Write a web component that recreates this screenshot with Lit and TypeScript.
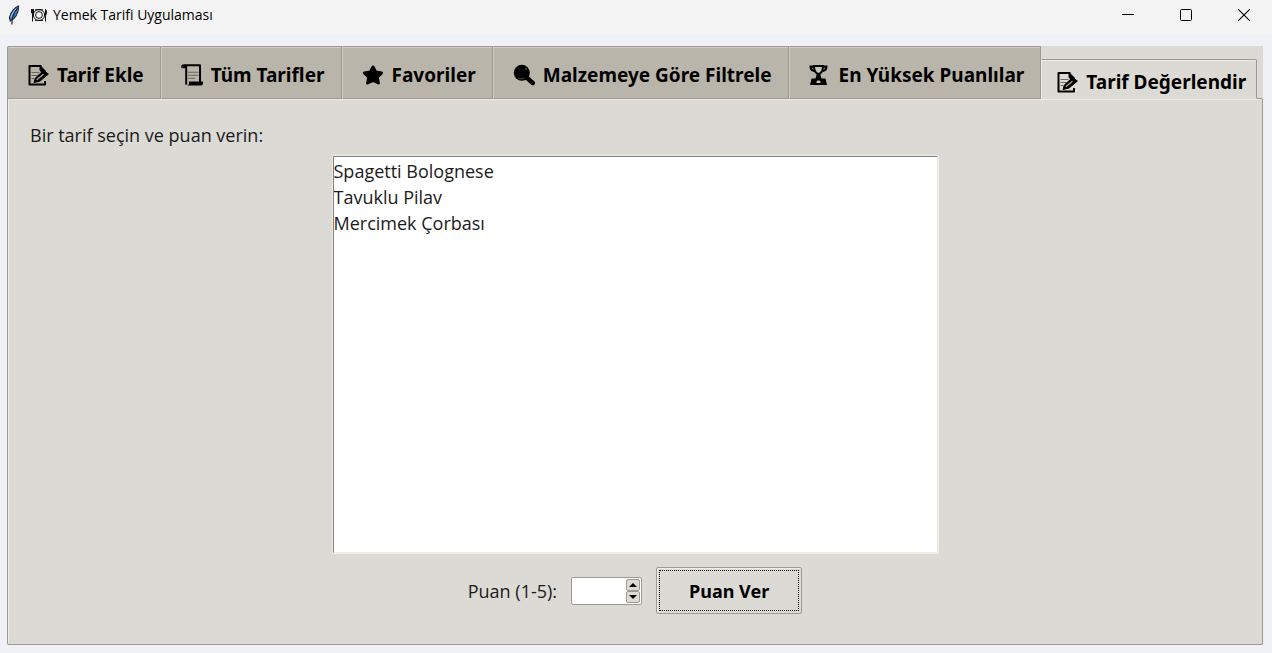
import { LitElement, html, css, svg } from "lit";
import { customElement, state } from "lit/decorators.js";
import { classMap } from "lit/directives/class-map.js";

const memo = svg`
  <path d="M14.500 2H2.500v18.500H18V17" fill="none" stroke="#000" stroke-width="2" stroke-linejoin="round"/>
  <path d="M13 1.500l5.500 5.500v2.500h-2L13 6.500z" fill="#000" stroke="#000" stroke-linejoin="round"/>
  <path d="M4.500 8.500h8M4.500 11.500h6M4.500 14.500h3" stroke="#6b675f" stroke-width="1"/>
  <path d="M7 18.500l1.400-4.500 8.200-7.500 4.800 3.600-8.400 7z" fill="#000" stroke="#000" stroke-width="1" stroke-linejoin="round"/>
  <path d="M9.800 15.800l6.600-5.600" stroke="#aaa69a" stroke-width="1.300"/>`;

const scroll = svg`
  <path d="M1.200 3.600C.8 2 1.600 1.200 3 1.200h16V18" fill="none" stroke="#000" stroke-width="2" stroke-linejoin="round"/>
  <path d="M1 4.200h4.600V1.400H3z" fill="#000"/>
  <path d="M5.200 2v18.600" stroke="#000" stroke-width="2"/>
  <path d="M7 8.200h10.500M7 11.200h10.500M7 14.200h7" stroke="#6b675f" stroke-width="1.100"/>
  <path d="M8 17.400h14v1.800c0 1.400-.8 2.200-2 2.200H5.600c1.600 0 2.400-1 2.400-2.200z" fill="#000"/>`;

const star = svg`
  <path d="M11 3l2.600 5 6 .9-4.400 4.200 1.200 5.900L11 16.400 5.600 19l1.200-5.900-4.400-4.200 6-.9z" fill="#000" stroke="#000" stroke-width="3" stroke-linejoin="round"/>`;

const lens = svg`
  <circle cx="8.800" cy="8.800" r="8" fill="#000"/>
  <path d="M13 13l6.800 6" stroke="#000" stroke-width="4.400" stroke-linecap="round"/>
  <path d="M5.400 14.200c1.600 1 4.400 1 6-.2" fill="none" stroke="#5d5a53" stroke-width=".9"/>
  <circle cx="13.200" cy="5" r=".8" fill="#77736a"/>`;

const trophy = svg`
  <path d="M5 2h9c0 4.500-1.600 7.200-4.500 8.200C6.600 9.200 5 6.500 5 2z" fill="#c9c5ba" stroke="#000" stroke-width="2"/>
  <path d="M5 2.600H1.600c0 2.800 1.400 4.200 4.200 4.600M14 2.600h3.400c0 2.800-1.400 4.200-4.200 4.600" fill="none" stroke="#000" stroke-width="2.200"/>
  <path d="M8 9.500h3l1.500 5h4l1.500 6.500H1L2.500 14.500h4z" fill="#000"/>
  <path d="M7.600 17.600c.6-1.400 3.200-1.400 3.800 0v1.400H7.600z" fill="#c9c5ba"/>`;

const tabs = [
  { label: "Tarif Ekle", icon: memo },
  { label: "Tüm Tarifler", icon: scroll },
  { label: "Favoriler", icon: star },
  { label: "Malzemeye Göre Filtrele", icon: lens },
  { label: "En Yüksek Puanlılar", icon: trophy },
  { label: "Tarif Değerlendir", icon: memo },
];

const recipes = ["Spagetti Bolognese", "Tavuklu Pilav", "Mercimek Çorbası"];

@customElement("app-root")
export class AppRoot extends LitElement {
  @state() private active = 5;
  @state() private score = "";

  static styles = css`
    :host {
      display: flex;
      flex-direction: column;
      box-sizing: border-box;
      min-height: 100vh;
      background: #f0f1f6;
      color: #1a1a1a;
      font-family: "Segoe UI", "Open Sans", sans-serif;
      font-size: 18px;
    }
    * { box-sizing: border-box; }
    button, input, select { font: inherit; color: inherit; margin: 0; }

    .titlebar {
      display: flex;
      align-items: center;
      gap: 2px;
      height: 34px;
      padding: 0 0 4px 6px;
      background: #f3f3f3;
    }
    .feather { width: 16px; height: 22px; }
    .plate { width: 18px; height: 16px; margin: 0 3px 0 6px; }
    .title { flex: 1; margin: 0; font-size: 14px; line-height: 18px; font-weight: 400; color: #000; }
    .caption {
      width: 56px;
      height: 30px;
      padding: 0;
      border: 0;
      background: none;
      display: grid;
      place-items: center;
    }

    .notebook {
      flex: 1;
      display: flex;
      flex-direction: column;
      margin: 12px 9px 8px 7px;
      background: #dcdad5;
    }
    .tabs { display: flex; align-items: flex-end; margin-bottom: -1px; position: relative; }
    .tab {
      display: flex;
      align-items: center;
      gap: 8px;
      height: 53px;
      padding: 4px 16px 0 19px;
      border: 1px solid #9e9a91;
      border-left-color: #cfcbc2;
      box-shadow: inset 0 1px #cfcbc2;
      background: #bab5ab;
      color: #000;
      font-family: "Segoe UI", "Noto Sans", sans-serif;
      font-size: 19px;
      font-weight: 700;
      white-space: nowrap;
    }
    .tab:first-child { border-left-color: #9e9a91; border-top-left-radius: 2px; }
    .tab.active {
      height: 40px;
      padding: 6px 10px 0 14px;
      border-left-color: #eeebe7;
      border-bottom-color: #dcdad5;
      border-top-right-radius: 2px;
      box-shadow: inset 0 1px #eeebe7;
      background: #dcdad5;
    }
    .icon { width: 22px; height: 22px; flex: none; }

    .panel {
      flex: 1;
      display: flex;
      flex-direction: column;
      padding: 23px 22px 30px;
      border: 1px solid #9e9a91;
      border-radius: 0 2px 2px 2px;
      box-shadow: inset 1px 1px #eeebe7;
    }
    .prompt { line-height: 26px; }
    .list {
      flex: 1;
      align-self: center;
      width: 50%;
      margin-top: 8px;
      padding: 2px 0;
      border: 1px solid;
      border-color: #828282 #eeebe7 #eeebe7 #828282;
      border-radius: 0;
      outline: 1px solid #eeebe7;
      background: #fff;
      overflow: hidden;
    }
    .list option { padding: 0; line-height: 26px; min-height: 26px; }

    .rate {
      display: flex;
      align-items: center;
      justify-content: center;
      gap: 14px;
      margin-top: 14px;
    }
    .spin {
      display: flex;
      width: 71px;
      height: 28px;
      padding: 1px;
      border: 1px solid #9e9a91;
      border-radius: 2px;
      background: #fff;
    }
    .score {
      flex: 1;
      min-width: 0;
      padding: 0 2px;
      border: 0;
      outline: 0;
      background: none;
      appearance: textfield;
    }
    .score::-webkit-inner-spin-button { appearance: none; }
    .arrows { display: flex; flex-direction: column; }
    .arrow {
      flex: 1;
      width: 14px;
      padding: 0;
      border: 1px solid #9e9a91;
      border-radius: 2px;
      background: #dcdad5;
      display: grid;
      place-items: center;
    }
    .submit {
      height: 47px;
      padding: 2px;
      border: 1px solid #9e9a91;
      border-radius: 2px;
      box-shadow: inset 1px 1px #eeebe7;
      background: #dcdad5;
      color: #000;
      font-family: "Segoe UI", "Noto Sans", sans-serif;
      font-weight: 700;
    }
    .focus {
      display: grid;
      place-items: center;
      height: 100%;
      padding: 0 29px;
      border: 1px dotted #000;
    }
  `;

  private step(delta: number) {
    const next = (Number(this.score) || 0) + delta;
    this.score = String(Math.min(5, Math.max(1, next)));
  }

  render() {
    return html`
      <header class="titlebar">
        <svg class="feather" viewBox="0 0 16 22" aria-hidden="true">
          <path d="M12.600 2C9 3 4.500 8 3.400 13.500l.8 3.500c4.400-1.500 8.600-7.500 8.400-15z" fill="#3d7cc4" stroke="#1c2733" stroke-width="1.100"/>
          <path d="M11.400 4C8 8 6 12 5.800 20.500" fill="none" stroke="#222" stroke-width="1.200"/>
          <path d="M10.200 4.500C7.500 7.500 5.500 10.500 5 13.500" fill="none" stroke="#a7cdf3" stroke-width="1"/>
        </svg>
        <svg class="plate" viewBox="0 0 18 16" aria-hidden="true" fill="none" stroke="#111" stroke-width="1">
          <circle cx="9" cy="8" r="5.600"/>
          <circle cx="9" cy="8" r="3.400"/>
          <path d="M2.500 2v12.500M1.500 2v4h2v-4M15.500 2v12.500M15.500 2.500c1.500 1 1.500 4 0 6M5 2.800h8M5 13.400h8"/>
        </svg>
        <h1 class="title">Yemek Tarifi Uygulaması</h1>
        <button class="caption" aria-label="Simge durumuna küçült">
          <svg width="12" height="12" viewBox="0 0 12 12"><path d="M0 5.500h12" stroke="#000"/></svg>
        </button>
        <button class="caption" aria-label="Ekranı kapla">
          <svg width="12" height="12" viewBox="0 0 12 12"><rect x=".5" y=".5" width="11" height="11" rx="1" fill="none" stroke="#000"/></svg>
        </button>
        <button class="caption" aria-label="Kapat">
          <svg width="12" height="12" viewBox="0 0 12 12"><path d="M.3.3l11.400 11.400M11.700.3L.3 11.700" stroke="#000" stroke-width="1.100"/></svg>
        </button>
      </header>
      <main class="notebook">
        <nav class="tabs" role="tablist">
          ${tabs.map(
            (tab, i) => html`<button
              role="tab"
              aria-selected=${i === this.active}
              class=${classMap({ tab: true, active: i === this.active })}
              @click=${() => (this.active = i)}
            ><svg class="icon" viewBox="0 0 22 22" aria-hidden="true">${tab.icon}</svg>${tab.label}</button>`
          )}
        </nav>
        <section class="panel" role="tabpanel">
          <label class="prompt" for="recipes">Bir tarif seçin ve puan verin:</label>
          <select class="list" id="recipes" size="15">
            ${recipes.map((name) => html`<option>${name}</option>`)}
          </select>
          <div class="rate">
            <label for="score">Puan (1-5):</label>
            <div class="spin">
              <input class="score" id="score" type="number" min="1" max="5" .value=${this.score}
                @input=${(e: Event) => (this.score = (e.target as HTMLInputElement).value)} />
              <div class="arrows">
                <button class="arrow" aria-label="Artır" @click=${() => this.step(1)}>
                  <svg width="8" height="4" viewBox="0 0 8 4"><path d="M0 4l4-4 4 4z"/></svg>
                </button>
                <button class="arrow" aria-label="Azalt" @click=${() => this.step(-1)}>
                  <svg width="8" height="4" viewBox="0 0 8 4"><path d="M0 0l4 4 4-4z"/></svg>
                </button>
              </div>
            </div>
            <button class="submit"><span class="focus">Puan Ver</span></button>
          </div>
        </section>
      </main>
    `;
  }
}
